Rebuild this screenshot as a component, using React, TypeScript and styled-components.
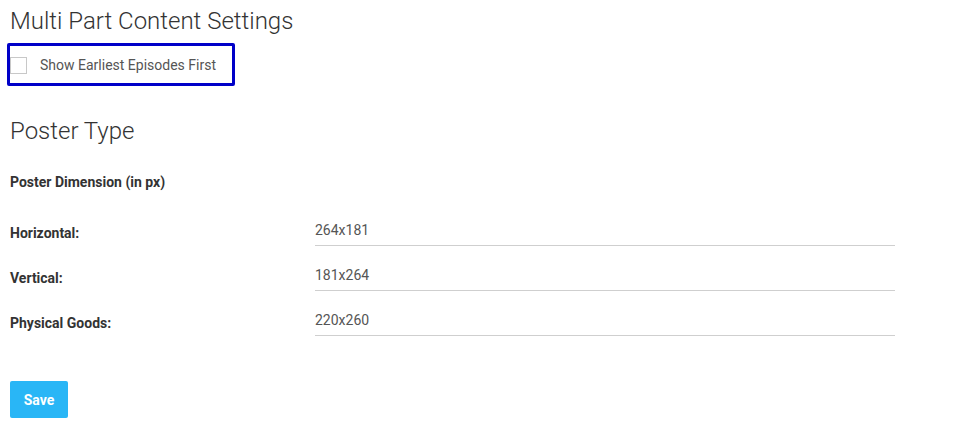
import React from "react";
import styled, { createGlobalStyle } from "styled-components";

const Global = createGlobalStyle`
  html, body { margin: 0; padding: 0; background: #fff; }
  body { font-family: Roboto, "Noto Sans", Arial, sans-serif; color: #333; }
  * { box-sizing: border-box; }
`;

const Page = styled.div`
  padding: 0 10px;
  display: flex;
  flex-direction: column;
`;

const SectionTitle = styled.h2<{ $top: number }>`
  margin: ${(p) => p.$top}px 0 0 0;
  font-size: 24px;
  line-height: 28px;
  font-weight: 300;
  color: #333;
`;

const CheckRow = styled.label`
  margin: 8px 0 0 -3px;
  width: 228px;
  height: 43px;
  border: 3px solid #0000c8;
  border-radius: 2px;
  display: flex;
  align-items: center;
  gap: 13px;
  font-size: 14px;
  color: #555;
  cursor: pointer;
`;

const Box = styled.span`
  width: 17px;
  height: 17px;
  border: 1px solid #c8c8c8;
  background: #fff;
  flex: none;
  margin-top: 2px;
`;

const SubHeading = styled.div`
  margin-top: 29px;
  font-size: 14px;
  font-weight: 700;
  line-height: 16px;
  color: #333;
`;

const Rows = styled.div`
  margin-top: 11px;
  display: flex;
  flex-direction: column;
`;

const Row = styled.div`
  display: grid;
  grid-template-columns: 305px 580px;
  align-items: end;
  height: 45px;
`;

const Label = styled.div`
  font-size: 14px;
  font-weight: 700;
  color: #333;
  line-height: 16px;
  padding-bottom: 5px;
`;

const Input = styled.input`
  border: none;
  border-bottom: 1px solid #cfcfcf;
  outline: none;
  font-family: Roboto, "Noto Sans", Arial, sans-serif;
  font-size: 14px;
  color: #555;
  padding: 0 0 5px 0;
  line-height: 16px;
  height: 26px;
  width: 100%;
  background: transparent;
`;

const SaveButton = styled.button`
  margin-top: 45px;
  align-self: flex-start;
  width: 58px;
  height: 37px;
  border: none;
  border-radius: 2px;
  background: #29b6f6;
  color: #fff;
  font-family: Roboto, "Noto Sans", Arial, sans-serif;
  font-weight: 700;
  font-size: 14px;
  cursor: pointer;
`;

const dims = [
  { label: "Horizontal:", value: "264x181" },
  { label: "Vertical:", value: "181x264" },
  { label: "Physical Goods:", value: "220x260" },
];

export default function App() {
  return (
    <>
      <Global />
      <Page>
        <SectionTitle $top={7}>Multi Part Content Settings</SectionTitle>
        <CheckRow>
          <Box />
          <span>Show Earliest Episodes First</span>
        </CheckRow>
        <SectionTitle $top={31}>Poster Type</SectionTitle>
        <SubHeading>Poster Dimension (in px)</SubHeading>
        <Rows>
          {dims.map((d) => (
            <Row key={d.label}>
              <Label>{d.label}</Label>
              <Input defaultValue={d.value} />
            </Row>
          ))}
        </Rows>
        <SaveButton>Save</SaveButton>
      </Page>
    </>
  );
}
